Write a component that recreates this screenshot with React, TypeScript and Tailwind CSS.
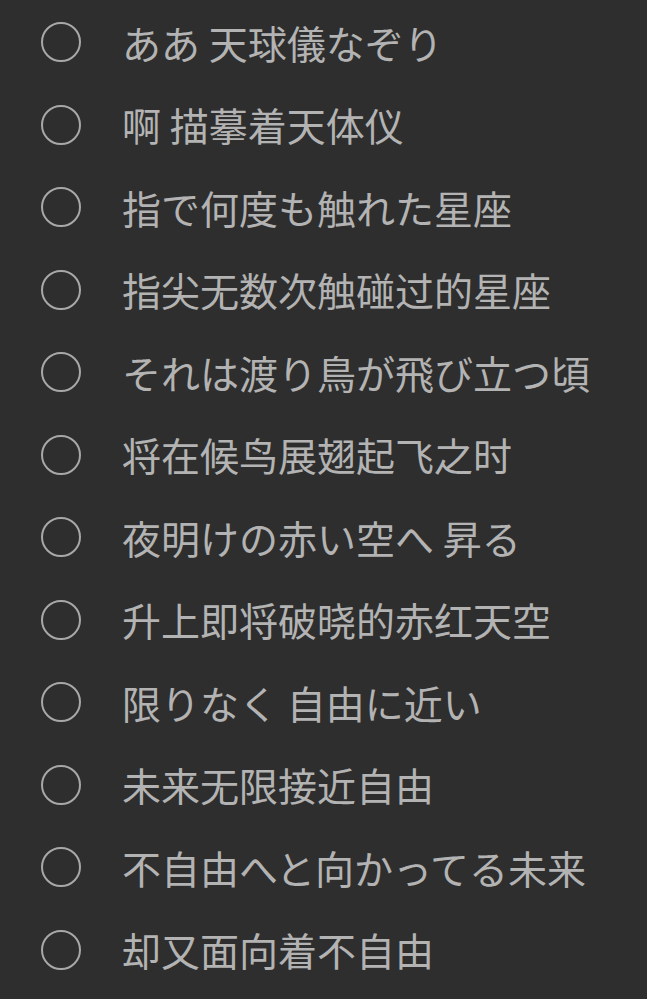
const lines = [
  'ああ 天球儀なぞり',
  '啊 描摹着天体仪',
  '指で何度も触れた星座',
  '指尖无数次触碰过的星座',
  'それは渡り鳥が飛び立つ頃',
  '将在候鸟展翅起飞之时',
  '夜明けの赤い空へ 昇る',
  '升上即将破晓的赤红天空',
  '限りなく 自由に近い',
  '未来无限接近自由',
  '不自由へと向かってる未来',
  '却又面向着不自由',
]

export default function App() {
  return (
    <div
      className="w-[647px] h-[999px] bg-[#2e2e2e] overflow-hidden"
      style={{ fontFamily: '"Noto Sans CJK JP", "Noto Sans CJK SC", sans-serif' }}
    >
      <ul className="pt-[1px]">
        {lines.map((line) => (
          <li key={line} className="flex items-center h-[82.5px] pl-[41px]">
            <span className="w-10 h-10 shrink-0 rounded-full border-[2.5px] border-[#a8a8a8]" />
            <span className="ml-[41px] text-[39px] leading-none text-[#b3b3b3] whitespace-nowrap">
              {line}
            </span>
          </li>
        ))}
      </ul>
    </div>
  )
}
